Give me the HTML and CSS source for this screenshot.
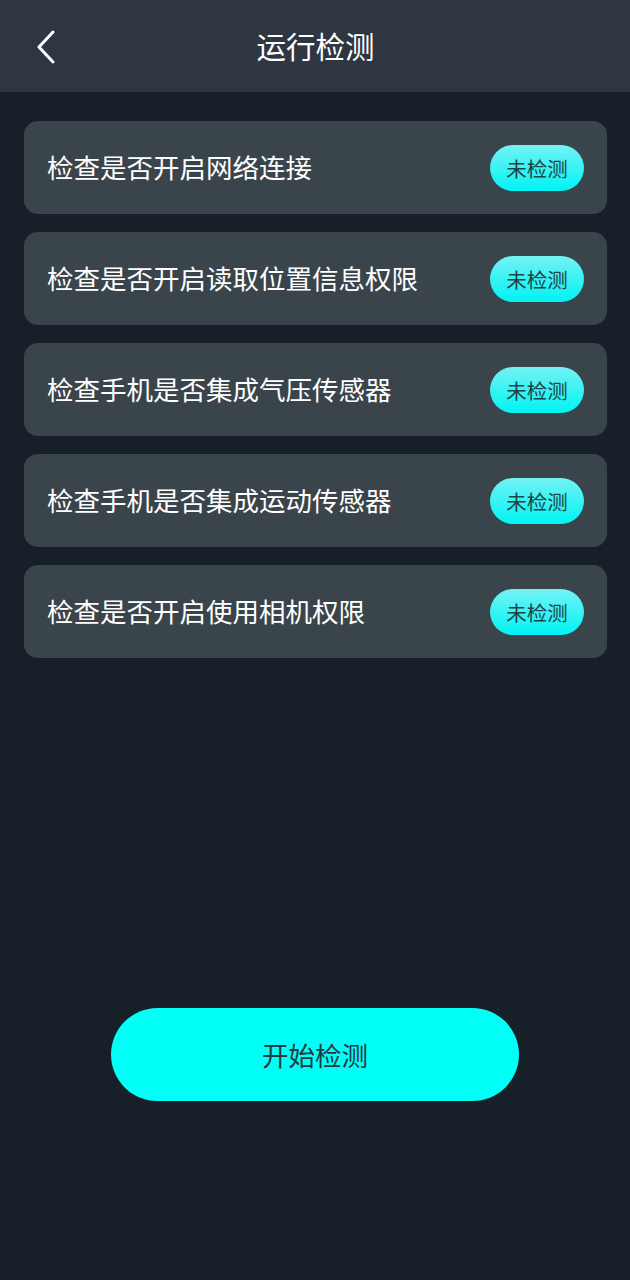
FILE: index.html
```html
<!DOCTYPE html>
<html lang="zh">
<head>
<meta charset="utf-8">
<link rel="stylesheet" href="styles.css">
</head>
<body>
<div class="page">
  <header class="topbar">
    <svg class="back" width="20" height="34" viewBox="0 0 20 34"><path d="M17 2 L3 17 L17 32" fill="none" stroke="#ffffff" stroke-width="3" stroke-linecap="round" stroke-linejoin="round"/></svg>
    <h1 class="title">运行检测</h1>
  </header>
  <main class="list">
    <div class="card"><span class="label">检查是否开启网络连接</span><span class="badge">未检测</span></div>
    <div class="card"><span class="label">检查是否开启读取位置信息权限</span><span class="badge">未检测</span></div>
    <div class="card"><span class="label">检查手机是否集成气压传感器</span><span class="badge">未检测</span></div>
    <div class="card"><span class="label">检查手机是否集成运动传感器</span><span class="badge">未检测</span></div>
    <div class="card"><span class="label">检查是否开启使用相机权限</span><span class="badge">未检测</span></div>
  </main>
  <div class="actions">
    <button class="start">开始检测</button>
  </div>
</div>
</body>
</html>
```
FILE: styles.css
```css
html, body {
  margin: 0;
  padding: 0;
  background: #172029;
}
body {
  font-family: "Noto Sans CJK SC", "Noto Sans", sans-serif;
  width: 630px;
  height: 1280px;
  overflow: hidden;
}
.topbar {
  position: relative;
  height: 92px;
  background: #2e3741;
  display: flex;
  align-items: center;
  justify-content: center;
}
.back {
  position: absolute;
  left: 36px;
  top: 30px;
}
.title {
  margin: 0;
  color: #ffffff;
  font-size: 29.5px;
  font-weight: 400;
  line-height: 1;
  margin-left: 1px;
}
.list {
  padding: 29px 23px 0 24px;
  display: flex;
  flex-direction: column;
  gap: 18px;
}
.card {
  height: 93px;
  background: #3a444b;
  border-radius: 14px;
  display: flex;
  align-items: center;
  justify-content: space-between;
  padding: 0 23px 0 23px;
}
.label {
  color: #ffffff;
  font-size: 26.5px;
  line-height: 1;
}
.badge {
  width: 94px;
  height: 46px;
  border-radius: 23px;
  background: linear-gradient(180deg, #74f2f5 0%, #00f3f3 100%);
  color: #1d4445;
  font-size: 20.5px;
  display: flex;
  align-items: center;
  justify-content: center;
}
.actions {
  display: flex;
  justify-content: center;
  margin-top: 350px;
}
.start {
  width: 408px;
  height: 93px;
  border: none;
  border-radius: 47px;
  background: #00fff6;
  color: #1d3a3c;
  font-family: "Noto Sans CJK SC", "Noto Sans", sans-serif;
  font-size: 26.5px;
}
```
